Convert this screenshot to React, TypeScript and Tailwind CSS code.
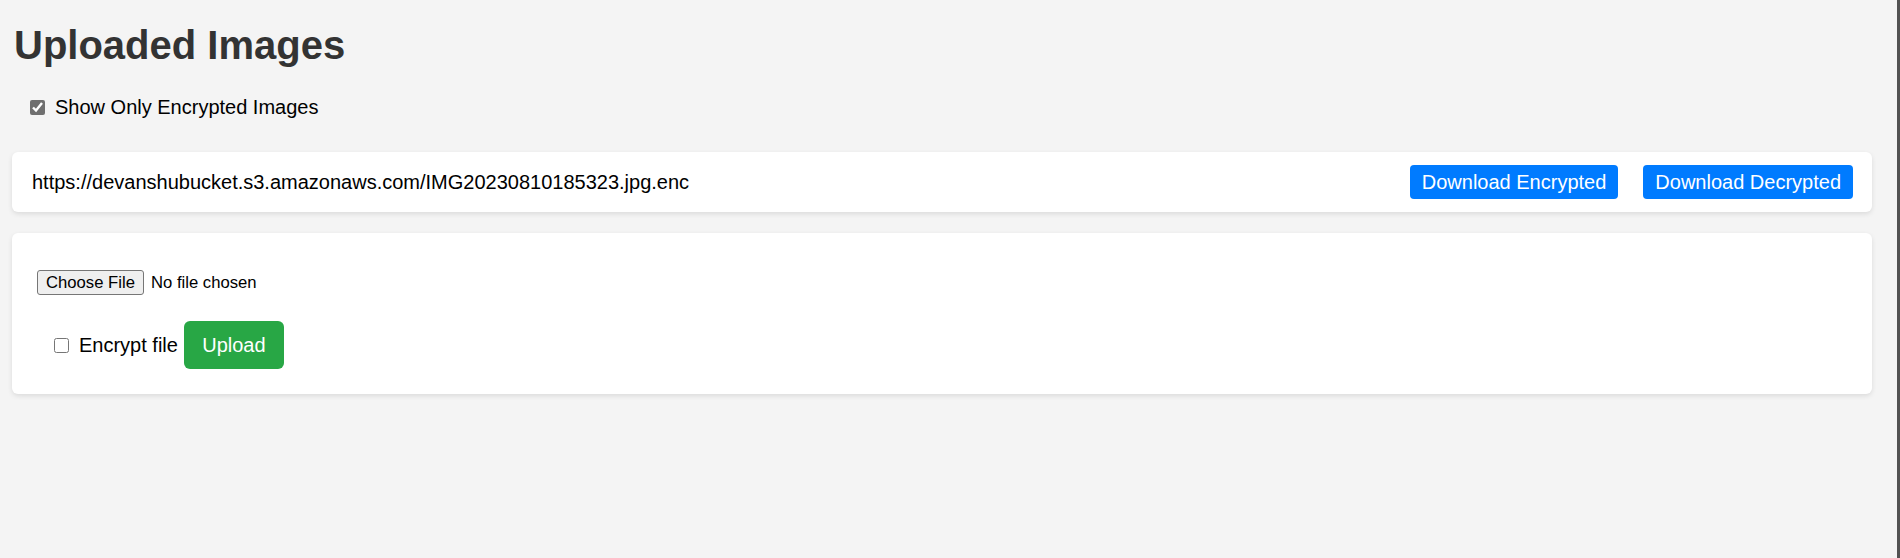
import React from "react";

function App() {
  return (
    <div className="flex h-screen w-full overflow-hidden font-['Liberation_Sans',Arial,sans-serif]">
      <div className="flex-1 bg-[#f4f4f4] pl-[12px] pr-[25px] pt-[22px]">
        <h1 className="ml-[2px] text-[40px] leading-[46px] font-bold text-[#333]">
          Uploaded Images
        </h1>

        <label className="mt-[28px] ml-[18px] flex items-center h-[23px] text-[20px] leading-[23px] text-black">
          <input
            type="checkbox"
            defaultChecked
            className="m-0 w-[15px] h-[15px] accent-[#6f6f6f]"
          />
          <span className="ml-[10px]">Show Only Encrypted Images</span>
        </label>

        <div className="mt-[33px] h-[60px] flex items-center justify-between bg-white rounded-[6px] shadow-[0_2px_5px_rgba(0,0,0,0.1)] pl-[20px] pr-[19px]">
          <span className="text-[20px] leading-[23px] text-black">
            https://devanshubucket.s3.amazonaws.com/IMG20230810185323.jpg.enc
          </span>
          <div className="flex items-center gap-[25px]">
            <button className="h-[34px] px-[12px] rounded-[4px] bg-[#007bff] text-white text-[20px] leading-[23px]">
              Download Encrypted
            </button>
            <button className="h-[34px] px-[12px] rounded-[4px] bg-[#007bff] text-white text-[20px] leading-[23px]">
              Download Decrypted
            </button>
          </div>
        </div>

        <div className="mt-[21px] bg-white rounded-[6px] shadow-[0_2px_5px_rgba(0,0,0,0.1)] pt-[37px] pb-[25px] pl-[25px]">
          <div className="flex items-center h-[25px] text-[16.67px] text-black">
            <button className="h-[25px] w-[107px] bg-[#efefef] border border-[#767676] rounded-[3px] text-[16.67px] leading-[19px] text-black">
              Choose File
            </button>
            <span className="ml-[7px]">No file chosen</span>
          </div>

          <div className="mt-[26px] ml-[17px] flex items-center h-[48px]">
            <input type="checkbox" className="m-0 w-[15px] h-[15px]" />
            <span className="ml-[10px] text-[20px] leading-[23px] text-black">Encrypt file</span>
            <button className="ml-[6px] h-[48px] w-[100px] rounded-[6px] bg-[#28a745] text-white text-[20px] leading-[23px]">
              Upload
            </button>
          </div>
        </div>
      </div>
      <div className="w-[3px] bg-[#525252]" />
    </div>
  );
}

export default App;
